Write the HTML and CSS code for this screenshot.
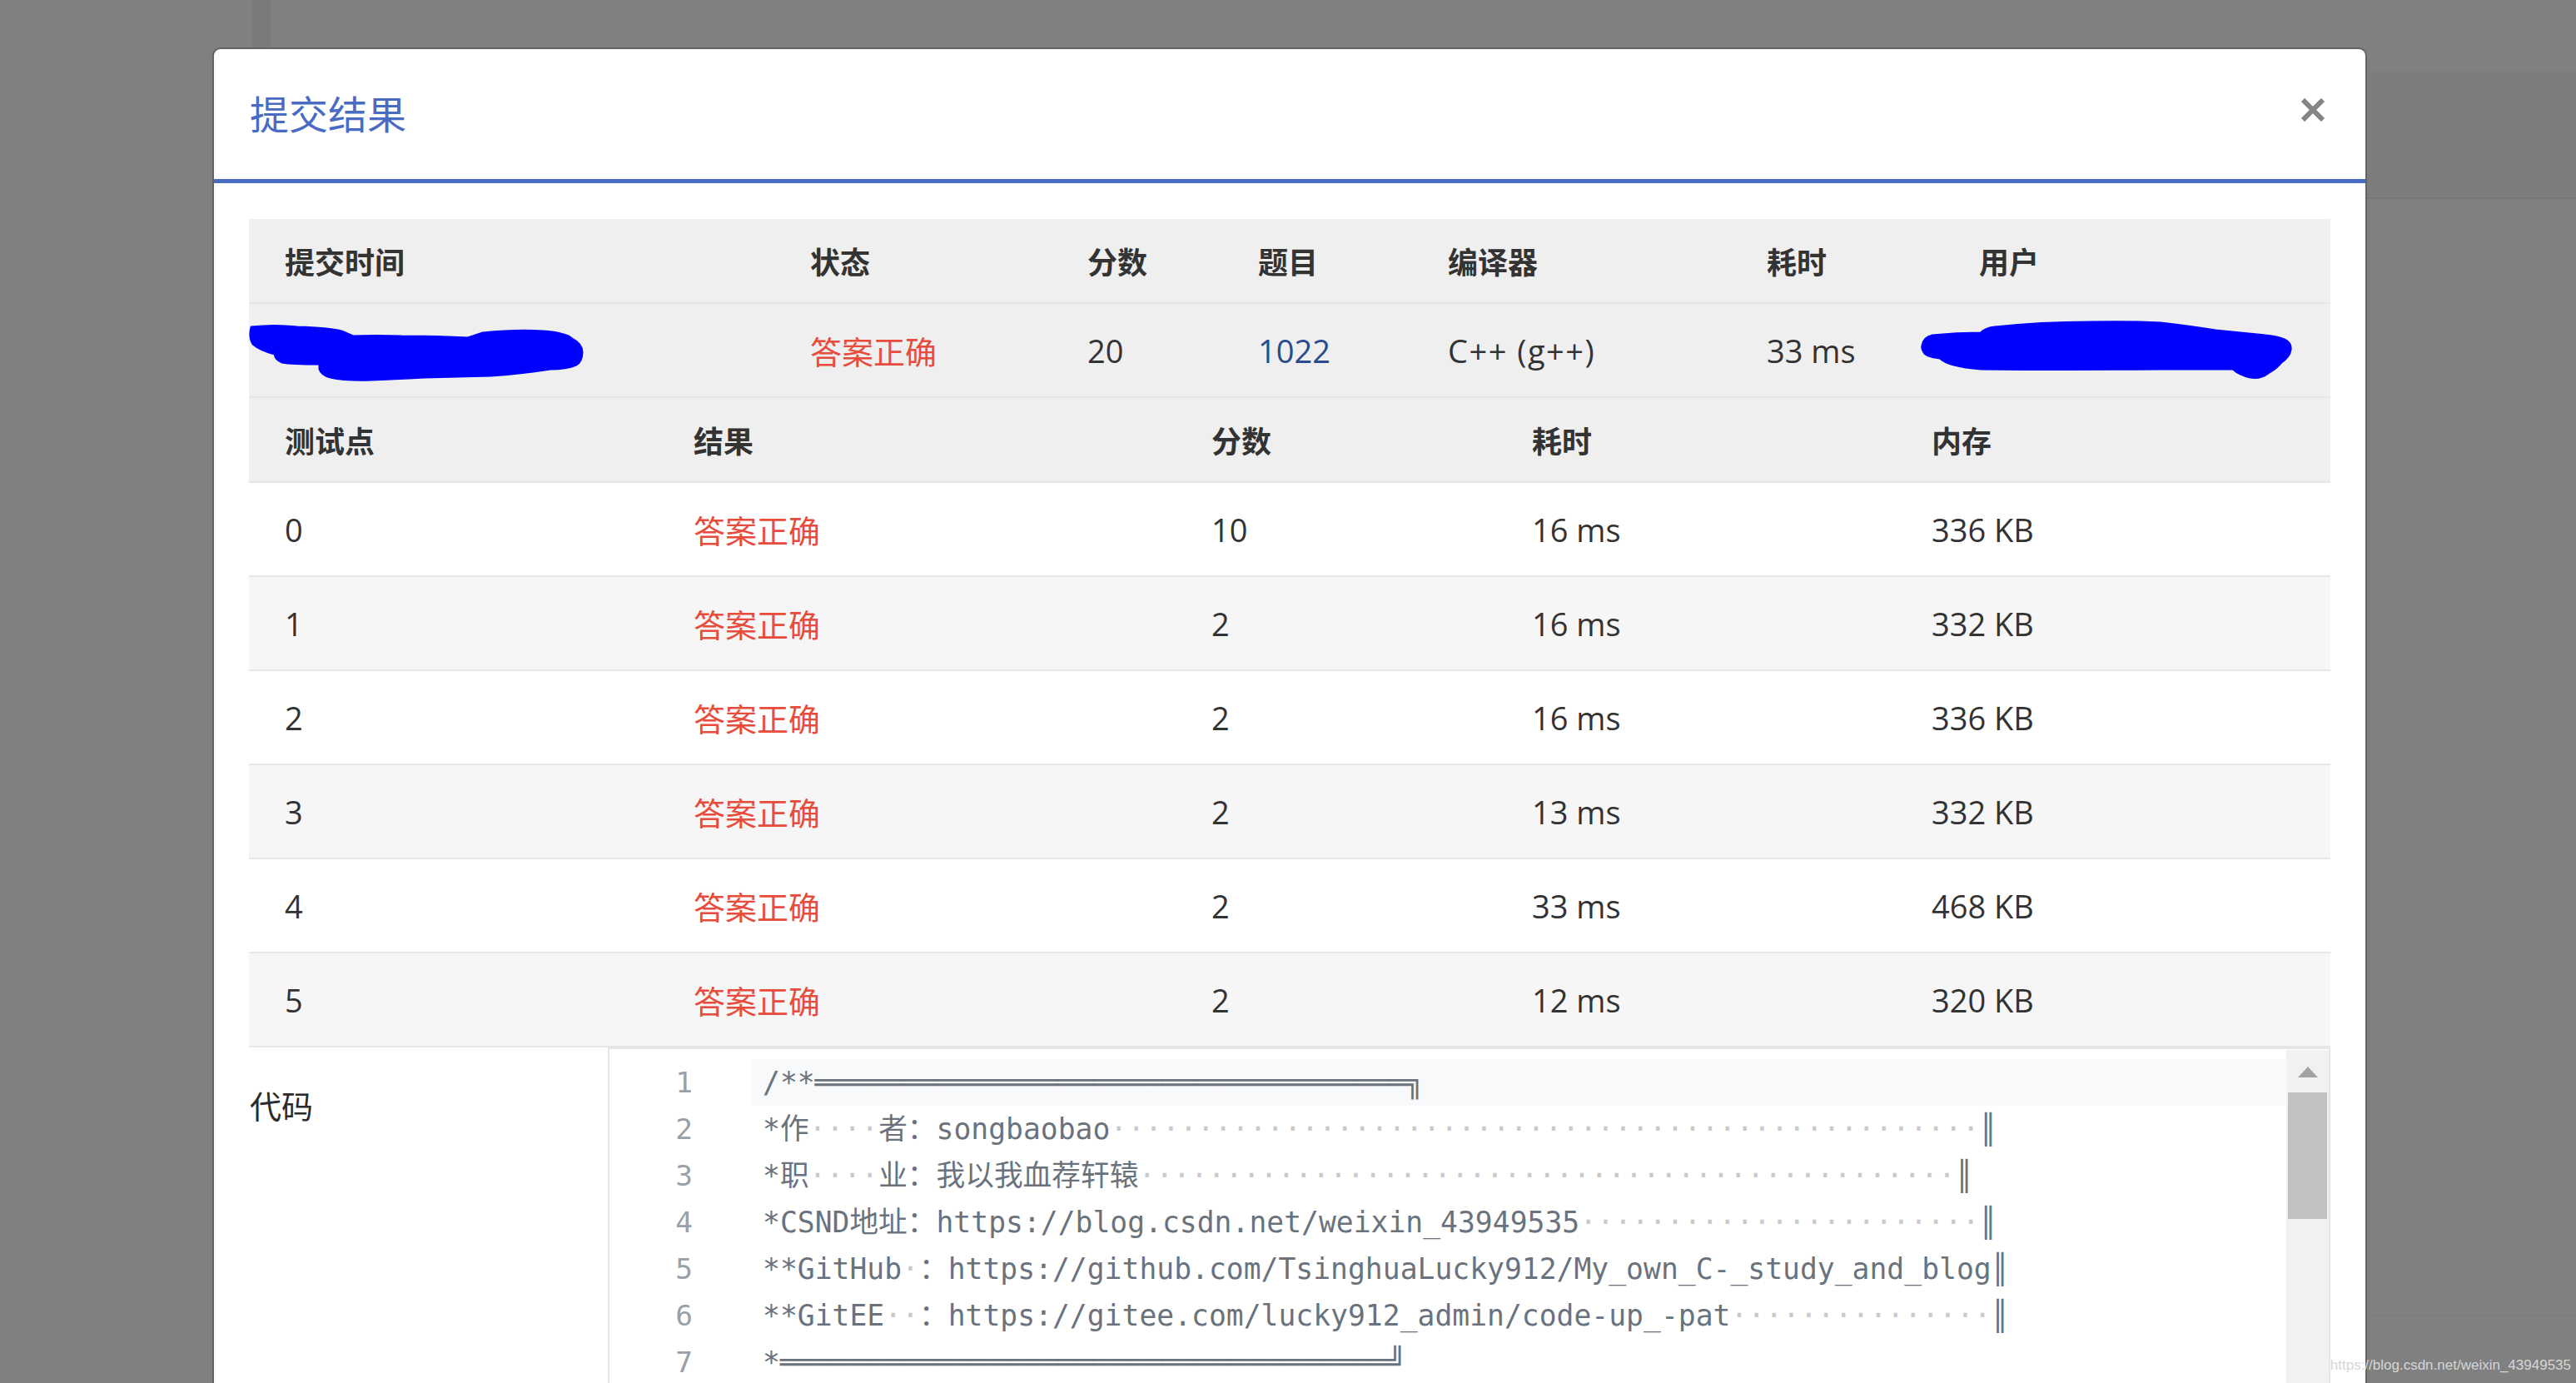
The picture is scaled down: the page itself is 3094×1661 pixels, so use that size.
FILE: index.html
```html
<!DOCTYPE html>
<html lang="zh-CN">
<head>
<meta charset="utf-8">
<title>提交结果</title>
<link rel="stylesheet" href="styles.css">
</head>
<body>
<div class="backdrop">
  <div class="bg-stripe"></div>
  <div class="bg-right"></div>
  <div class="bg-right-low"></div>
  <div class="modal">
    <div class="modal-header">
      <h4 class="modal-title">提交结果</h4>
      <button class="close" type="button" aria-label="Close">
        <svg width="30" height="28" viewBox="0 0 30 28"><path d="M3 2 L27 26 M27 2 L3 26" stroke="#858585" stroke-width="6" stroke-linecap="butt" fill="none"/></svg>
      </button>
    </div>
    <div class="modal-body">
      <div class="tbl t1">
        <div class="row head">
          <div class="cell">提交时间</div>
          <div class="cell">状态</div>
          <div class="cell">分数</div>
          <div class="cell">题目</div>
          <div class="cell">编译器</div>
          <div class="cell">耗时</div>
          <div class="cell">用户</div>
        </div>
        <div class="row info">
          <div class="cell"></div>
          <div class="cell ok">答案正确</div>
          <div class="cell">20</div>
          <div class="cell"><a class="link">1022</a></div>
          <div class="cell compiler">C++ (g++)</div>
          <div class="cell">33 ms</div>
          <div class="cell"></div>
          <svg class="blot blot-time" width="408" height="72" viewBox="296 388 408 72"><path d="M302 393 Q330 390 357 393 Q395 394 410 398 L424 404 Q450 403 482 404 Q530 404 562 406 L580 400 Q620 396 652 398 Q680 400 687 407 Q699 413 699 423 Q699 434 692 438 Q680 443 661 443 Q630 448 589 451 Q550 452 509 453 Q470 455 446 456 Q415 457 397 453 Q386 450 384 443 L384 437 Q350 437 339 435 Q331 432 330 425 Q312 420 304 413 Q299 405 302 393 Z" fill="#0000ff" stroke="#0000ff" stroke-width="3" stroke-linejoin="round"/></svg>
          <svg class="blot blot-user" width="452" height="76" viewBox="2304 382 452 76"><path d="M2309 415 Q2311 405 2321 403 Q2350 400 2379 400 Q2385 394 2396 393 Q2450 387 2512 387 Q2560 386 2595 388 Q2630 392 2661 397 Q2690 400 2711 402 Q2735 404 2744 408 Q2752 412 2751 420 Q2750 428 2740 435 Q2735 442 2724 448 Q2715 455 2703 453 Q2690 450 2682 443 Q2640 443 2595 443 Q2480 444 2379 443 Q2340 440 2330 430 Q2313 428 2311 423 Q2308 419 2309 415 Z" fill="#0000ff" stroke="#0000ff" stroke-width="3" stroke-linejoin="round"/></svg>
        </div>
      </div>
      <div class="tbl t2">
        <div class="row head">
          <div class="cell">测试点</div>
          <div class="cell">结果</div>
          <div class="cell">分数</div>
          <div class="cell">耗时</div>
          <div class="cell">内存</div>
        </div>
        <div class="row data">
          <div class="cell">0</div><div class="cell ok">答案正确</div><div class="cell">10</div><div class="cell">16 ms</div><div class="cell">336 KB</div>
        </div>
        <div class="row data odd">
          <div class="cell">1</div><div class="cell ok">答案正确</div><div class="cell">2</div><div class="cell">16 ms</div><div class="cell">332 KB</div>
        </div>
        <div class="row data">
          <div class="cell">2</div><div class="cell ok">答案正确</div><div class="cell">2</div><div class="cell">16 ms</div><div class="cell">336 KB</div>
        </div>
        <div class="row data odd">
          <div class="cell">3</div><div class="cell ok">答案正确</div><div class="cell">2</div><div class="cell">13 ms</div><div class="cell">332 KB</div>
        </div>
        <div class="row data">
          <div class="cell">4</div><div class="cell ok">答案正确</div><div class="cell">2</div><div class="cell">33 ms</div><div class="cell">468 KB</div>
        </div>
        <div class="row data odd">
          <div class="cell">5</div><div class="cell ok">答案正确</div><div class="cell">2</div><div class="cell">12 ms</div><div class="cell">320 KB</div>
        </div>
      </div>
      <div class="code-section">
        <div class="code-label">代码</div>
        <div class="editor">
          <div class="gutter">
            <div class="ln">1</div>
            <div class="ln">2</div>
            <div class="ln">3</div>
            <div class="ln">4</div>
            <div class="ln">5</div>
            <div class="ln">6</div>
            <div class="ln">7</div>
          </div>
          <div class="lines">
            <div class="line current">/**══════════════════════════════════╗</div>
            <div class="line">*作<span class="ws">····</span>者：songbaobao<span class="ws">··················································</span>║</div>
            <div class="line">*职<span class="ws">····</span>业：我以我血荐轩辕<span class="ws">···············································</span>║</div>
            <div class="line">*CSND地址：https://blog.csdn.net/weixin_43949535<span class="ws">·······················</span>║</div>
            <div class="line">**GitHub<span class="ws">·</span>：https://github.com/TsinghuaLucky912/My_own_C-_study_and_blog║</div>
            <div class="line">**GitEE<span class="ws">··</span>：https://gitee.com/lucky912_admin/code-up_-pat<span class="ws">···············</span>║</div>
            <div class="line">*═══════════════════════════════════╝</div>
          </div>
          <div class="scrollbar">
            <div class="sb-arrow"></div>
            <div class="sb-thumb"></div>
          </div>
        </div>
      </div>
    </div>
  </div>
  <div class="watermark">https://blog.csdn.net/weixin_43949535</div>
</div>
</body>
</html>
```

FILE: styles.css
```css
html, body {
  margin: 0;
  padding: 0;
}

body {
  width: 3094px;
  height: 1661px;
  overflow: hidden;
  background: #808080;
  font-family: "Open Sans", "Noto Sans CJK SC", sans-serif;
  color: #333;
}

.backdrop {
  position: relative;
  width: 3094px;
  height: 1661px;
  padding: 57px 0 0 255px;
  box-sizing: border-box;
  overflow: hidden;
}

/* faint page elements behind the overlay */
.bg-stripe {
  position: absolute;
  left: 303px;
  top: 0;
  width: 22px;
  height: 57px;
  background: #7b7b7b;
}

.bg-right {
  position: absolute;
  left: 2843px;
  top: 86px;
  width: 251px;
  height: 151px;
  background: #7d7d7d;
  border-bottom: 2px solid #777;
}

.bg-right-low {
  position: absolute;
  left: 2843px;
  top: 1580px;
  width: 251px;
  height: 81px;
  border-top: 1px solid #7a7a7a;
}

.modal {
  position: relative;
  width: 2588px;
  height: 1700px;
  box-sizing: border-box;
  background: #fff;
  background-clip: padding-box;
  border: 2px solid rgba(0, 0, 0, 0.22);
  border-bottom: none;
  border-radius: 10px 10px 0 0;
}

.modal-header {
  height: 161px;
  box-sizing: border-box;
  display: flex;
  align-items: center;
  justify-content: space-between;
  padding: 0 48px 6px 43px;
  border-bottom: 5px solid #4a6bc3;
}

.modal-title {
  margin: 0;
  font-family: "Noto Sans CJK SC", sans-serif;
  font-size: 47px;
  font-weight: 400;
  color: #4a6bc3;
  line-height: 1;
}

.close {
  border: none;
  background: none;
  padding: 0;
  margin: 0 0 4px 0;
  width: 30px;
  height: 28px;
  display: flex;
}

.modal-body {
  padding: 43px 42px 0 42px;
}

.tbl .row {
  display: grid;
  box-sizing: border-box;
  border-bottom: 2px solid #e6e6e6;
  position: relative;
}

.t1 .row {
  grid-template-columns: 631px 333px 205px 228px 383px 255px 1fr;
}

.t2 .row {
  grid-template-columns: 491px 622px 385px 480px 1fr;
}

.cell {
  display: flex;
  align-items: center;
  padding-left: 43px;
  white-space: nowrap;
}

.row.head {
  height: 102px;
  background: #efefef;
  font-size: 36px;
  font-weight: 700;
  color: #333;
}

.row.info {
  height: 113px;
  background: #efefef;
  font-size: 38px;
}

.compiler {
  letter-spacing: 1.5px;
}

.row.data {
  height: 113px;
  background: #fff;
  font-size: 38px;
}

.row.data.odd {
  background: #f6f6f6;
}

.ok {
  color: #e74c3c;
}

.link {
  color: #2a4b8d;
  text-decoration: none;
}

.blot {
  position: absolute;
  display: block;
}

.blot-time {
  left: -3px;
  top: 23px;
}

.blot-user {
  left: 2005px;
  top: 17px;
}

.code-section {
  display: grid;
  grid-template-columns: 431px 1fr;
}

.code-label {
  padding: 42px 0 0 1px;
  font-size: 38px;
  line-height: 56px;
  color: #2b2b2b;
}

.editor {
  height: 420px;
  box-sizing: border-box;
  border: 2px solid #e6e6e6;
  display: flex;
  background: #fff;
}

.gutter {
  width: 170px;
  box-sizing: border-box;
  padding: 12px 70px 0 0;
  text-align: right;
  font-family: "DejaVu Sans Mono", monospace;
  font-size: 34.5px;
  line-height: 56px;
  color: #9aa0a7;
}

.lines {
  flex: 1;
  padding-top: 12px;
  font-family: "DejaVu Sans Mono", "Noto Sans CJK SC", monospace;
  font-size: 34.7px;
  line-height: 56px;
  color: #6a737d;
  overflow: hidden;
}

.line {
  height: 56px;
  padding-left: 14px;
  white-space: pre;
}

.line.current {
  background: #f8f9fa;
}

.ws {
  color: #cacaca;
}

.scrollbar {
  width: 51px;
  background: #f1f1f1;
  margin-top: 1px;
  display: flex;
  flex-direction: column;
  align-items: center;
}

.sb-arrow {
  margin-top: 20px;
  width: 0;
  height: 0;
  border-left: 12.5px solid transparent;
  border-right: 12.5px solid transparent;
  border-bottom: 13px solid #a3a3a3;
}

.sb-thumb {
  margin-top: 18px;
  width: 47px;
  height: 152px;
  background: #c1c1c1;
}

.watermark {
  position: absolute;
  right: 6px;
  bottom: 11px;
  font-family: "Liberation Sans", sans-serif;
  font-size: 17px;
  color: #d6d6d6;
}
```
